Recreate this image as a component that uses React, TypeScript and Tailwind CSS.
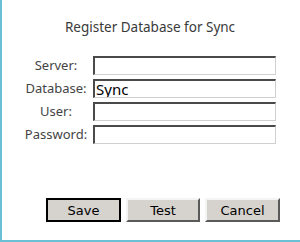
export default function App() {
  const fields = [
    { label: 'Server:', value: '' },
    { label: 'Database:', value: 'Sync' },
    { label: 'User:', value: '' },
    { label: 'Password:', value: '' },
  ];

  return (
    <div className="w-[300px] h-[242px] bg-white border-l-2 border-b-2 border-[#6cc0d6] flex flex-col font-['Noto_Sans',sans-serif]">
      {/* Title */}
      <div className="pt-[18px] h-[56px] text-center text-[13.5px] leading-[19px] text-[#3a3a3a] pr-[2px]">
        Register Database for Sync
      </div>

      {/* Fields */}
      <div className="flex flex-col gap-[4px] pl-[21px]">
        {fields.map((f) => (
          <div key={f.label} className="flex items-center h-[19px]">
            <label className="w-[66px] text-center text-[13px] leading-[19px] text-[#444]">
              {f.label}
            </label>
            <input
              readOnly
              value={f.value}
              className="ml-[4px] w-[183px] h-[19px] border-t-2 border-l-2 border-t-[#4a4a4a] border-l-[#4a4a4a] border-b border-r border-b-[#d0d0d0] border-r-[#d0d0d0] bg-white px-[1px] text-[15px] leading-[16px] text-black outline-none font-['Noto_Sans',sans-serif]"
            />
          </div>
        ))}
      </div>

      {/* Buttons */}
      <div className="flex gap-[5px] pl-[44px] mt-[54px]">
        <button className="w-[75px] h-[24px] bg-[#d6d3ce] border-2 border-black text-[13px] leading-[19px] text-black font-['DejaVu_Sans',sans-serif]">
          Save
        </button>
        <button className="w-[74px] h-[24px] bg-[#d6d3ce] border-2 border-t-[#f4f4f4] border-l-[#f4f4f4] border-b-[#5a5a5a] border-r-[#5a5a5a] text-[13px] leading-[19px] text-black font-['DejaVu_Sans',sans-serif]">
          Test
        </button>
        <button className="w-[75px] h-[24px] bg-[#d6d3ce] border-2 border-t-[#f4f4f4] border-l-[#f4f4f4] border-b-[#5a5a5a] border-r-[#5a5a5a] text-[13px] leading-[19px] text-black font-['DejaVu_Sans',sans-serif]">
          Cancel
        </button>
      </div>
    </div>
  );
}
